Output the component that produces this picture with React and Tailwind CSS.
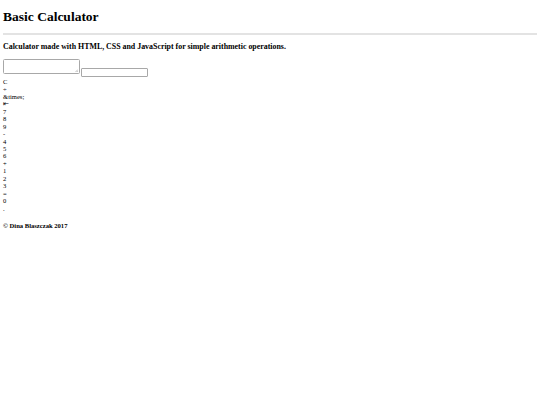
import React from 'react';

const keys = ['C', '÷', '&times;', '⇤', '7', '8', '9', '-', '4', '5', '6', '+', '1', '2', '3', '=', '0', '.'];

export default function App() {
  return (
    <div className="min-h-[405px] bg-white px-[3px] text-black font-['Liberation_Serif','Times_New_Roman',serif]">
      <h1 className="pt-[8.7px] text-[13.5px] font-bold leading-[15.4px]">Basic Calculator</h1>
      <hr className="mt-[8.6px] h-[2px] border-0 bg-[#e3e3e3]" />
      <h3 className="mt-[7.7px] text-[7.9px] font-bold leading-[9px]">
        Calculator made with HTML, CSS and JavaScript for simple arithmetic operations.
      </h3>

      {/* display fields */}
      <div className="mt-[8px] flex items-start gap-[1px]">
        <div className="relative h-[15px] w-[77px] rounded-[1.5px] border border-[#a8a8a8] bg-white">
          <svg className="absolute bottom-[1px] right-[1px]" width="3" height="3" viewBox="0 0 3 3">
            <path d="M0.5 3 L3 0.5 M1.8 3 L3 1.8" stroke="#9a9a9a" strokeWidth="0.6" />
          </svg>
        </div>
        <div className="mt-[9px] h-[9px] w-[67px] rounded-[1px] border border-[#a8a8a8] bg-white" />
      </div>

      {/* calculator keys, unstyled */}
      <div className="mt-[0.4px] text-[6.6px] leading-[7.47px]">
        {keys.map((k, i) => (
          <div key={i}>{k}</div>
        ))}
      </div>

      <p className="mt-[10px] text-[6.6px] font-bold leading-[7.5px]">© Dina Blaszczak 2017</p>
    </div>
  );
}
